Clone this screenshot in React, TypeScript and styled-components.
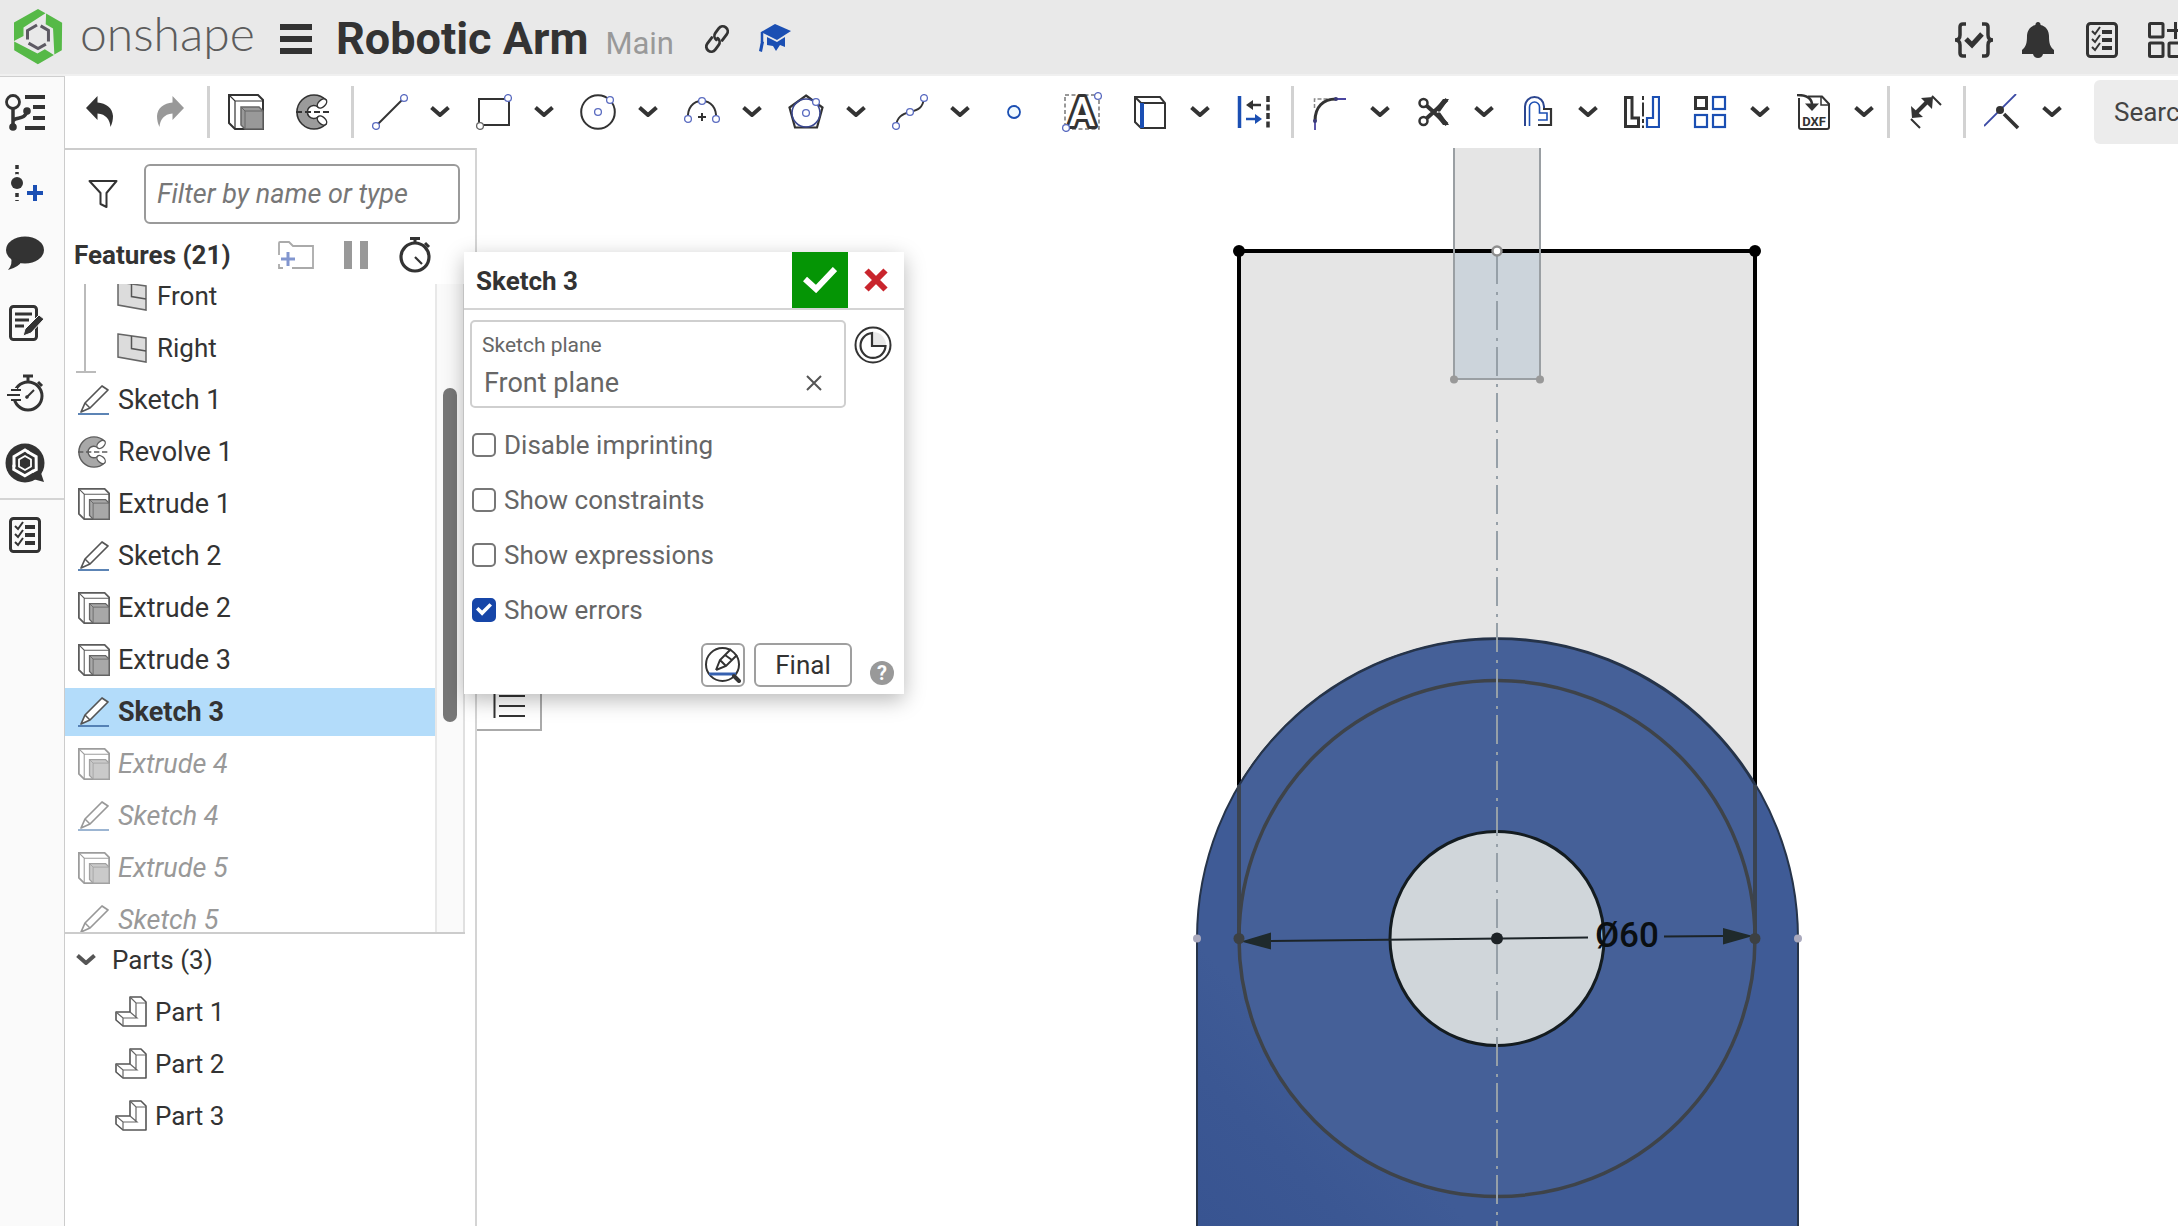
import React from "react";
import styled, { createGlobalStyle, css } from "styled-components";

const INK = "#333333";
const BLUE = "#1b4fb3";
const PALE_BLUE = "#5a6bc0";

const GlobalStyle = createGlobalStyle`
  * { box-sizing: border-box; }
  html, body { margin: 0; padding: 0; background: #ffffff; }
  body {
    font-family: Roboto, "Liberation Sans", sans-serif;
    font-size: 26px;
    line-height: 32px;
    color: ${INK};
    overflow: hidden;
  }
  button, input { font: inherit; color: inherit; }
  ul { list-style: none; margin: 0; padding: 0; }
  svg { display: block; flex: none; }
`;

/* ---------- icons ---------- */

type IconProps = { size?: number; soft?: boolean };

const Icon = ({
  w = 36,
  h = 36,
  box,
  children,
}: {
  w?: number;
  h?: number;
  box?: string;
  children: React.ReactNode;
}) => (
  <svg width={w} height={h} viewBox={box ?? `0 0 ${w} ${h}`} fill="none" aria-hidden="true">
    {children}
  </svg>
);

const Knot = ({ x, y, c = PALE_BLUE }: { x: number; y: number; c?: string }) => (
  <circle cx={x} cy={y} r="3.4" fill="#fff" stroke={c} strokeWidth="1.3" />
);

const LogoMark = () => (
  <Icon w={50} h={56}>
    {[0, 120, 240].map((a) => (
      <path
        key={a}
        d="M1 32V13.500L25 0L32.500 4.300L10.500 18.500V27Z"
        fill="#56b947"
        transform={`rotate(${a} 25 27.5)`}
      />
    ))}
    {[0, 120, 240].map((a) => (
      <path
        key={a}
        d="M14.500 30.500V21.500L24 16"
        stroke="#5d5a63"
        strokeWidth="3"
        transform={`rotate(${a} 25 27.5)`}
      />
    ))}
  </Icon>
);

const MenuIcon = () => (
  <Icon w={32} h={30}>
    <path d="M0 3H32M0 15H32M0 27H32" stroke={INK} strokeWidth="6" />
  </Icon>
);

const LinkIcon = () => (
  <Icon w={30} h={30}>
    <g transform="rotate(-53 15 15)" stroke={INK} strokeWidth="2.800" strokeLinecap="round">
      <path d="M13 10H5.500a5 5 0 0 0 0 10H11a5 5 0 0 0 5-5" />
      <path d="M17 20h7.500a5 5 0 0 0 0-10H19a5 5 0 0 0-5 5" />
    </g>
  </Icon>
);

const GradCapIcon = () => (
  <Icon w={34} h={32}>
    <path d="M17 1L33 8L19 17L3 9Z" fill={BLUE} />
    <path d="M9 14L19 19L27 14V24L22 22L18 28L15 23L9 22Z" fill={BLUE} />
    <path d="M4 9V19" stroke={BLUE} strokeWidth="2.500" />
    <path d="M3 18L6 19L4 29L1 28Z" fill={BLUE} />
  </Icon>
);

const BracesIcon = () => (
  <Icon w={40}>
    <path
      d="M12 2H9Q6 2 6 5V13Q6 18 1 18Q6 18 6 23V31Q6 34 9 34H12M28 2H31Q34 2 34 5V13Q34 18 39 18Q34 18 34 23V31Q34 34 31 34H28"
      stroke={INK}
      strokeWidth="3.500"
    />
    <path d="M12 17L18 23L28 12" stroke={INK} strokeWidth="5" />
  </Icon>
);

const BellIcon = () => (
  <Icon>
    <path
      d="M18 0a2.500 2.500 0 0 1 2.500 3C26 4 29 9 29 14C29 21 30 25 34 28V32H2V28C6 25 7 21 7 14C7 9 10 4 15.500 3A2.500 2.500 0 0 1 18 0Z"
      fill={INK}
    />
    <path d="M13 32H23Q22 36 18 36Q14 36 13 32Z" fill={INK} />
  </Icon>
);

const ChecklistIcon = () => (
  <Icon>
    <rect x="3.500" y="1.500" width="29" height="33" rx="3" stroke={INK} strokeWidth="3" />
    <path d="M18 10H28M18 18H28M18 26H28" stroke={INK} strokeWidth="4" />
    <path d="M8 9L11 12L16 5M8 17L11 20L16 13M8 25L11 28L16 21" stroke={INK} strokeWidth="2" />
  </Icon>
);

const AppsIcon = () => (
  <Icon>
    <g stroke={INK} strokeWidth="3">
      <rect x="1.500" y="1.500" width="13.500" height="13.500" rx="1" />
      <rect x="1.500" y="21" width="13.500" height="13.500" rx="1" />
      <rect x="21" y="21" width="13.500" height="13.500" rx="1" />
      <path d="M19 8.500H36M27.500 0V17" />
    </g>
  </Icon>
);

const ChevronIcon = ({ color = INK, w = 20 }: { color?: string; w?: number }) => (
  <Icon w={w} h={12} box="0 0 20 12">
    <path d="M1.500 1.500L10 9L18.500 1.500" stroke={color} strokeWidth="4" strokeLinejoin="round" />
  </Icon>
);

const CURVED_ARROW =
  "M2 14L13.500 2V8.500C22 9 28.500 14 29 22C29 26 28 30 26.500 33C26 26 22 20 13.500 19.500V26Z";

const UndoIcon = () => (
  <Icon>
    <path d={CURVED_ARROW} fill={INK} />
  </Icon>
);

const RedoIcon = () => (
  <Icon>
    <path d={CURVED_ARROW} fill="#999" transform="translate(34 0) scale(-1 1)" />
  </Icon>
);

const ExtrudeIcon = ({ size = 36, soft }: IconProps) => {
  const line = soft ? "#5c5c5c" : INK;
  return (
    <Icon w={size} h={size} box="0 0 36 36">
      <path d="M1 1H30L35 6V35H7L1 29Z" fill="#fff" stroke={line} strokeWidth="2" />
      <path d="M1 1L7 7H35M7 7V35" stroke={line} strokeWidth="1.200" />
      <path d="M13 13H31L35 17V35H17L13 31Z" fill={soft ? "#a8a8a8" : "#999"} stroke="#666" strokeWidth="1.500" />
      <path d="M13 13L17 17H35M17 17V35" stroke="#666" strokeWidth="1" />
    </Icon>
  );
};

const RevolveIcon = ({ size = 36, soft }: IconProps) => {
  const line = soft ? "#5c5c5c" : INK;
  return (
    <Icon w={size} h={size} box="0 0 36 36">
      <path
        d="M30 6A17 17 0 1 0 30 30L22 23A6.500 6.500 0 1 1 22 13Z"
        fill={soft ? "#a8a8a8" : "#9b9b9b"}
        stroke={line}
        strokeWidth="1.600"
      />
      <ellipse cx="26" cy="9.500" rx="5.500" ry="3.500" transform="rotate(-43 26 9.500)" fill="#fff" stroke={line} strokeWidth="1.500" />
      <ellipse cx="26" cy="26.500" rx="5.500" ry="3.500" transform="rotate(43 26 26.500)" fill="#fff" stroke={line} strokeWidth="1.500" />
      <path d="M0 18H36" stroke={line} strokeWidth="1.800" strokeDasharray="6 3" />
    </Icon>
  );
};

const LineIcon = () => (
  <Icon>
    <path d="M4 32L32 4" stroke={INK} strokeWidth="2" />
    <Knot x={4} y={32} />
    <Knot x={32} y={4} />
  </Icon>
);

const RectIcon = () => (
  <Icon>
    <rect x="3" y="5" width="30" height="26" stroke={INK} strokeWidth="2" />
    <Knot x={32} y={4} />
    <Knot x={4} y={32} c="#666" />
  </Icon>
);

const CircleIcon = () => (
  <Icon>
    <circle cx="18" cy="18" r="16.800" stroke={INK} strokeWidth="2" />
    <Knot x={18} y={18} />
    <Knot x={30} y={6} />
  </Icon>
);

const ArcIcon = () => (
  <Icon>
    <path d="M4 25C3 14 9 7 18 7S33 14 32 25" stroke={INK} strokeWidth="2" />
    <path d="M14 23H22M18 19V27" stroke={INK} strokeWidth="2" />
    <Knot x={18} y={7} />
    <Knot x={4} y={25} />
    <Knot x={32} y={25} />
  </Icon>
);

const PolygonIcon = () => (
  <Icon>
    <path d="M18 1.500L34.500 13.500L29 33.500H7L1.500 13.500Z" stroke={INK} strokeWidth="2.200" />
    <circle cx="18" cy="19" r="14" stroke="#3a4790" strokeWidth="1.500" />
    <Knot x={18} y={19} />
    <Knot x={28} y={8} />
  </Icon>
);

const SplineIcon = () => (
  <Icon>
    <path d="M4 32C5 23 10 20 18 18S31 14 32 4" stroke={INK} strokeWidth="2" />
    <Knot x={4} y={32} />
    <Knot x={18} y={18} />
    <Knot x={32} y={4} />
  </Icon>
);

const PointIcon = () => (
  <Icon>
    <circle cx="18" cy="18" r="6" fill="#f0faff" stroke={BLUE} strokeWidth="1.800" />
  </Icon>
);

const TextIcon = () => (
  <Icon w={40} h={40}>
    <rect x="3" y="3" width="34" height="34" stroke="#777" strokeWidth="1.500" strokeDasharray="4 2.500" />
    <text
      x="20"
      y="34"
      textAnchor="middle"
      fontSize="40"
      fontWeight="500"
      fontFamily="Roboto, sans-serif"
      fill="#fff"
      stroke={INK}
      strokeWidth="6"
      strokeLinejoin="round"
      paintOrder="stroke"
    >
      A
    </text>
    <Knot x={36} y={4} />
    <Knot x={4} y={36} />
  </Icon>
);

const UseIcon = () => (
  <Icon>
    <path d="M3 3H28L33 9V34H9L3 28Z" stroke={INK} strokeWidth="2" />
    <path d="M3 3L9 9H33" stroke={INK} strokeWidth="2" />
    <path d="M10 9V34" stroke={BLUE} strokeWidth="4" />
  </Icon>
);

const SpacingIcon = () => (
  <Icon>
    <path d="M3.500 2V34" stroke={BLUE} strokeWidth="3.500" />
    <path d="M32 2V34" stroke={INK} strokeWidth="3.500" strokeDasharray="6 2.500" />
    <path d="M25 11H14" stroke={INK} strokeWidth="2.500" />
    <path d="M17 6L10 11L17 16Z" fill={INK} />
    <path d="M10 25H21" stroke={BLUE} strokeWidth="2.500" />
    <path d="M19 20L26 25L19 30Z" fill={BLUE} />
  </Icon>
);

const FilletIcon = () => (
  <Icon>
    <path d="M2.500 14V5H18" stroke="#888" strokeWidth="1.500" strokeDasharray="4 2" />
    <path d="M3 27C3 13 11 5 24 5" stroke={INK} strokeWidth="3" />
    <path d="M3 26V36M24 5H34" stroke="#4a45a0" strokeWidth="1.800" />
    <circle cx="3" cy="27" r="2" fill="#3a3a78" />
    <circle cx="24" cy="5" r="2" fill="#3a3a78" />
  </Icon>
);

const TrimIcon = () => (
  <Icon>
    <g stroke={INK}>
      <circle cx="7.500" cy="9" r="4" strokeWidth="2.500" />
      <circle cx="7.500" cy="27" r="4" strokeWidth="2.500" />
      <path d="M11 24L22 14L31 5.500M11 12L22 22L31 30.500" strokeWidth="4" />
    </g>
    <path d="M20 14L27 5H33L23 19ZM20 22L27 31H33L23 17Z" fill={INK} />
  </Icon>
);

const OffsetIcon = () => (
  <Icon>
    <path d="M5 32V12.500A9.500 9.500 0 0 1 24 12.500V15H31" stroke="#2c4690" strokeWidth="2" />
    <path d="M23 15H31V31H18" stroke={INK} strokeWidth="2.200" />
    <path d="M9.500 32V13A5 5 0 0 1 19.500 13V19H27V26H18" stroke={BLUE} strokeWidth="1.600" />
  </Icon>
);

const MirrorIcon = () => (
  <Icon>
    <path d="M1.500 3.500H8V24H14.500V32.500H1.500Z" stroke={INK} strokeWidth="3" />
    <path d="M19 2V34" stroke={INK} strokeWidth="2" strokeDasharray="4 2.500 14 2.500" />
    <path d="M35 3H29V24H23V33H35Z" stroke={BLUE} strokeWidth="2.200" />
  </Icon>
);

const PatternIcon = () => (
  <Icon>
    <rect x="3.500" y="3.500" width="11" height="11" stroke={INK} strokeWidth="3" />
    <rect x="21" y="3" width="12" height="12" stroke={BLUE} strokeWidth="2.200" />
    <rect x="3" y="21" width="12" height="12" stroke={BLUE} strokeWidth="2.200" />
    <rect x="21" y="21" width="12" height="12" stroke={BLUE} strokeWidth="2.200" />
  </Icon>
);

const DxfIcon = () => (
  <Icon>
    <path d="M12 2.500H26L33 10V33Q33 35 31 35H5Q3 35 3 33V4" stroke={INK} strokeWidth="2" />
    <path d="M25 3V11H33" stroke={INK} strokeWidth="1.500" />
    <path d="M1 1C10 1 16 4 16 11" stroke={INK} strokeWidth="2.500" />
    <path d="M9 9.500H23L16 17Z" fill={INK} />
    <text x="18" y="32" textAnchor="middle" fontSize="13" fontWeight="700" fontFamily="Roboto, sans-serif" fill={INK}>
      DXF
    </text>
  </Icon>
);

const DimensionIcon = () => (
  <Icon>
    <path d="M8 19L20 7" stroke={INK} strokeWidth="4" />
    <path d="M13 4L25 3L24 15ZM3 12L4 24L15 23Z" fill={INK} />
    <path d="M24 2L33 11M3 25L12 34" stroke={INK} strokeWidth="2" />
  </Icon>
);

const ConstraintIcon = () => (
  <Icon>
    <path d="M0 32L32 0" stroke="#3b4aa5" strokeWidth="1.800" />
    <circle cx="16" cy="16" r="4" fill={INK} />
    <path d="M20 20L34 34" stroke={INK} strokeWidth="3.500" />
  </Icon>
);

const TreeIcon = () => (
  <Icon w={40} h={40}>
    <circle cx="8" cy="9" r="6.500" stroke={INK} strokeWidth="2.800" />
    <path d="M8 16V34M8 28C10 23 20 28 22 18" stroke={INK} strokeWidth="3.500" />
    <circle cx="22" cy="18" r="3.800" fill={INK} />
    <circle cx="8" cy="34" r="3.800" fill={INK} />
    <path d="M20 4H40M28 14H40M28 25H40M20 35H40" stroke={INK} strokeWidth="3.800" />
  </Icon>
);

const VersionIcon = () => (
  <Icon w={40} h={40}>
    <path d="M12 2V38" stroke={INK} strokeWidth="3.500" strokeDasharray="4 3" />
    <circle cx="12" cy="20" r="9" fill="#fafafa" />
    <circle cx="12" cy="20" r="6" fill={INK} />
    <path d="M22 30H38M30 22V38" stroke={BLUE} strokeWidth="4" />
  </Icon>
);

const CommentIcon = () => (
  <Icon w={40} h={40}>
    <ellipse cx="20" cy="17" rx="19" ry="13.500" fill={INK} />
    <path d="M6 24Q8 31 3 37Q14 34 17 28Z" fill={INK} />
  </Icon>
);

const NoteIcon = () => (
  <Icon w={40} h={40}>
    <rect x="5.500" y="3.500" width="26" height="33" rx="3" stroke={INK} strokeWidth="3" />
    <path d="M10 11H27M10 17H24M10 23H19" stroke={INK} strokeWidth="3" />
    <path d="M34 12L39 16L26 30L18 33L20 26Z" fill={INK} stroke="#fafafa" strokeWidth="1" />
  </Icon>
);

const TimerIcon = () => (
  <Icon w={40} h={40}>
    <circle cx="23" cy="23" r="14" stroke={INK} strokeWidth="3" />
    <path d="M18 3H28M23 3V9M33 9L37 13" stroke={INK} strokeWidth="3" />
    <path d="M21 25L29 17" stroke={INK} strokeWidth="2" />
    <circle cx="22" cy="24" r="1.800" fill={INK} />
    <path d="M6 15H12V28H6Z" fill="#fafafa" />
    <path d="M6 17H16M2 22H15M6 27H16" stroke={INK} strokeWidth="2" />
  </Icon>
);

const AssistantIcon = () => (
  <Icon w={40} h={40}>
    <circle cx="20" cy="20" r="19.500" fill={INK} />
    <path d="M28 36L39 39L35 27Z" fill={INK} />
    {[0, 120, 240].map((a) => (
      <path key={a} d="M9 24V13.500L20 7L24 9.500" stroke="#fff" strokeWidth="3" transform={`rotate(${a} 20 20)`} />
    ))}
    <path d="M20 13L26 16.500V23.500L20 27L14 23.500V16.500Z" stroke="#fff" strokeWidth="1.800" />
  </Icon>
);

const FunnelIcon = () => (
  <Icon w={30} h={30}>
    <path d="M1.500 2H28.500L18.500 14V28L12.500 25V14Z" stroke={INK} strokeWidth="2" strokeLinejoin="round" />
  </Icon>
);

const FolderIcon = () => (
  <Icon w={36} h={28}>
    <path d="M1 14V2Q1 1 2 1H11L15 5H35V27H14M1 23V27H5" stroke="#aaa" strokeWidth="1.800" />
    <path d="M3 18H17M10 11V25" stroke="#8296cf" strokeWidth="3" />
  </Icon>
);

const PauseIcon = () => (
  <Icon w={24} h={28}>
    <path d="M4 0V28M20 0V28" stroke="#999" strokeWidth="8" />
  </Icon>
);

const StopwatchIcon = () => (
  <Icon w={34} h={36}>
    <circle cx="17" cy="20" r="14" stroke={INK} strokeWidth="3.200" />
    <path d="M12 1.500H22M17 1.500V6M27 6L31 10" stroke={INK} strokeWidth="3" />
    <path d="M17 20L24 27" stroke={INK} strokeWidth="2.200" />
  </Icon>
);

const PlaneIcon = () => (
  <Icon w={30} h={30}>
    <path d="M1 1L29 5V29L1 24Z" fill="#dcdcdc" stroke="#666" strokeWidth="1.500" />
    <path d="M14.500 3V15.500L29 18" stroke="#555" strokeWidth="1.500" />
  </Icon>
);

const PencilIcon = () => (
  <Icon w={32} h={32}>
    <path d="M3 28L7 19L24 2L30 6L12 24Z" fill="#fff" stroke="#555" strokeWidth="1.700" strokeLinejoin="round" />
    <path d="M7 19L12 24" stroke="#555" strokeWidth="1.500" />
    <path d="M0 30H31" stroke="#4a76ad" strokeWidth="1.800" />
  </Icon>
);

const PartIcon = () => (
  <Icon w={32} h={32}>
    <path d="M15 1H26L31 6V30H8L1 24V16H15Z" stroke="#555" strokeWidth="1.600" strokeLinejoin="round" />
    <path d="M15 1L21 7H31M21 7V21M1 16L8 22H22L15 16M8 22V30" stroke="#666" strokeWidth="1.200" />
  </Icon>
);

const CheckIcon = () => (
  <Icon w={34} h={26}>
    <path d="M2 12L13 22L32 2" stroke="#fff" strokeWidth="6" />
  </Icon>
);

const CancelIcon = () => (
  <Icon w={24} h={24}>
    <path d="M2.500 2.500L21.500 21.500M21.500 2.500L2.500 21.500" stroke="#c9252d" strokeWidth="6" />
  </Icon>
);

const ClearIcon = () => (
  <Icon w={16} h={16}>
    <path d="M1 1L15 15M15 1L1 15" stroke="#555" strokeWidth="2" />
  </Icon>
);

const HistoryIcon = () => (
  <Icon w={38} h={38}>
    <circle cx="19" cy="19" r="17.500" stroke={INK} strokeWidth="2" />
    <path d="M19 6A13 13 0 0 1 32 20H19Z" fill="#e8e8e8" />
    <path d="M18 7A12.500 12.500 0 1 0 31.500 20H18Z" stroke={INK} strokeWidth="2.200" />
  </Icon>
);

const SketchZoomIcon = () => (
  <Icon w={36} h={36}>
    <circle cx="17.500" cy="17.500" r="16.500" stroke={INK} strokeWidth="2" />
    <path d="M11 23L15 13L26 2M11 23L21 19L32 8M15 13L21 19M20 8L27 13" stroke={INK} strokeWidth="2" />
    <path d="M4 27H31" stroke="#3560b0" strokeWidth="3" />
    <path d="M29 29L34 34" stroke={INK} strokeWidth="4" strokeLinecap="round" />
  </Icon>
);

const OutlineIcon = () => (
  <Icon w={32} h={24}>
    <path d="M1.500 0V24M6 2H32M6 12H32M6 22H32" stroke={INK} strokeWidth="2" />
  </Icon>
);

/* ---------- shell ---------- */

const Page = styled.div`
  display: flex;
  flex-direction: column;
  height: 100vh;
  overflow: hidden;
`;

const PlainButton = styled.button`
  display: flex;
  align-items: center;
  justify-content: center;
  flex: none;
  padding: 0;
  border: 0;
  background: none;
`;

const Header = styled.header`
  display: flex;
  align-items: center;
  flex: none;
  height: 76px;
  padding-left: 13px;
  background: #e9e9e9;
  border-bottom: 2px solid #f0f0f0;
  overflow: hidden;
`;

const Brand = styled.a`
  display: flex;
  align-items: center;
  gap: 17px;
  flex: 0 0 267px;
  height: 72px;
  color: #5c5c5c;
  font-family: Lato, sans-serif;
  font-weight: 300;
  font-size: 48px;
  line-height: 48px;
  text-decoration: none;
  white-space: nowrap;
`;

const BrandName = styled.span`
  padding-bottom: 8px;
`;

const MenuButton = styled(PlainButton)`
  padding-top: 4px;
`;

const TitleGroup = styled.div`
  display: flex;
  align-items: baseline;
  padding-top: 4px;
`;

const Title = styled.h1`
  margin: 0 17px 0 24px;
  font-size: 45px;
  line-height: 56px;
  font-weight: 700;
  white-space: nowrap;
`;

const Workspace = styled.span`
  font-size: 31px;
  color: #999999;
`;

const TitleActions = styled.div`
  display: flex;
  gap: 26px;
  margin-left: 28px;
  padding-top: 4px;
`;

const HeaderActions = styled.div`
  display: flex;
  margin-left: auto;
  margin-right: -20px;
`;

const HeaderButton = styled(PlainButton)`
  width: 64px;
  height: 64px;
  padding-top: 6px;
`;

const Body = styled.div`
  display: flex;
  flex: 1;
  min-height: 0;
`;

const Rail = styled.nav`
  display: flex;
  flex-direction: column;
  flex: 0 0 65px;
  padding-top: 1px;
  background: #fafafa;
  border-top: 1px solid #cfcfcf;
  border-right: 1px solid #cccccc;
`;

const RailGroup = styled.div`
  display: flex;
  flex-direction: column;

  & + & {
    border-top: 2px solid #d4d4d4;
  }
`;

const RailButton = styled(PlainButton)`
  width: 50px;
  height: 70px;
`;

const Main = styled.main`
  display: flex;
  flex-direction: column;
  flex: 1;
  min-width: 0;
`;

/* ---------- toolbar ---------- */

const Toolbar = styled.div`
  display: flex;
  align-items: center;
  flex: none;
  height: 72px;
  padding-left: 11px;
  overflow: hidden;
`;

const ToolGroup = styled.div`
  display: flex;
  gap: 16px;
  flex: none;
`;

const Tool = styled.div`
  display: flex;
`;

const ToolButton = styled(PlainButton)`
  width: 52px;
  height: 52px;
`;

const ToolMenuButton = styled(PlainButton)`
  width: 36px;
  height: 52px;
  padding-left: 12px;
`;

const Divider = styled.span`
  flex: none;
  width: 3px;
  height: 52px;
  margin: 0 10px 0 11px;
  background: #d2d2d2;
`;

const SearchBox = styled.input`
  flex: 0 0 200px;
  height: 64px;
  margin-left: 30px;
  padding: 0 20px;
  border: 0;
  border-radius: 6px;
  background: #ececec;

  &::placeholder {
    color: #444444;
    opacity: 1;
  }
`;

/* ---------- feature panel ---------- */

const Content = styled.div`
  position: relative;
  display: flex;
  flex: 1;
  min-height: 0;
`;

const Panel = styled.aside`
  display: flex;
  flex-direction: column;
  flex: 0 0 412px;
  min-width: 0;
  border-top: 2px solid #cccccc;
  border-right: 2px solid #d4d4d4;
`;

const FilterRow = styled.div`
  display: flex;
  align-items: center;
  gap: 26px;
  padding: 14px 15px 0 23px;
`;

const FilterInput = styled.input`
  flex: 1;
  min-width: 0;
  height: 60px;
  padding: 0 11px;
  border: 2px solid #9a9a9a;
  border-radius: 6px;
  font-size: 27px;
  font-style: italic;

  &::placeholder {
    color: #777777;
    opacity: 1;
  }
`;

const FeaturesHeader = styled.div`
  display: flex;
  align-items: center;
  flex: none;
  height: 60px;
  padding: 2px 0 0 9px;
`;

const PanelTitle = styled.h2`
  flex: 0 0 204px;
  margin: 0;
  font-size: 26px;
  font-weight: 700;
`;

const FeatureActions = styled.div`
  display: flex;
  align-items: center;
  gap: 30px;
`;

const FeatureArea = styled.div`
  display: flex;
  flex: 1;
  min-height: 0;
  margin-right: 10px;
  overflow: hidden;
  border-bottom: 2px solid #cccccc;
`;

const FeatureList = styled.ul`
  flex: 1;
  margin-top: -14px;
`;

const PlaneGroup = styled.li`
  display: grid;
  grid-template-columns: 20px 1fr;
  column-gap: 21px;
  padding-left: 11px;
  height: 104px;
`;

const Bracket = styled.svg`
  width: 20px;
  height: 103px;
`;

const itemText = css`
  display: flex;
  align-items: center;
  width: 100%;
  height: 52px;
  white-space: nowrap;
`;

const ChildRow = styled.li`
  ${itemText}
  gap: 10px;
`;

const FeatureRow = styled.li<{ $state?: "active" | "suppressed" }>`
  ${itemText}
  gap: 8px;
  padding-left: 13px;
  font-size: 27px;

  ${(p) =>
    p.$state === "active" &&
    css`
      height: 48px;
      margin: 2px 0;
      background: #b3dcfa;
      font-weight: 700;
    `}

  ${(p) =>
    p.$state === "suppressed" &&
    css`
      color: #999999;
      font-style: italic;

      svg {
        opacity: 0.6;
      }
    `}
`;

const ScrollTrack = styled.div`
  flex: 0 0 29px;
  padding: 104px 6px 0;
  background: #fafafa;
  border-left: 2px solid #e8e8e8;
  border-right: 2px solid #e0e0e0;
`;

const ScrollThumb = styled.div`
  width: 14px;
  height: 334px;
  border-radius: 7px;
  background: #777777;
`;

const PartsArea = styled.section`
  flex: 0 0 292px;
`;

const PartsHeader = styled(PlainButton)`
  gap: 14px;
  height: 52px;
  padding-left: 9px;
`;

const PartRow = styled.li`
  ${itemText}
  gap: 8px;
  padding-left: 50px;
`;

/* ---------- canvas ---------- */

const Canvas = styled.section`
  flex: 1;
  min-width: 0;
  overflow: hidden;
`;

const Drawing = styled.svg`
  width: 100%;
  height: 100%;
`;

const OutlineButton = styled(PlainButton)`
  position: absolute;
  left: 412px;
  top: 520px;
  width: 65px;
  height: 63px;
  padding: 12px 0 0;
  background: #ffffff;
  border: 2px solid #aaaaaa;
  border-left: 0;
`;

/* ---------- sketch dialog ---------- */

const Dialog = styled.form`
  position: absolute;
  left: 399px;
  top: 104px;
  width: 440px;
  background: #ffffff;
  box-shadow: 0 6px 20px rgba(0, 0, 0, 0.28);
  color: #666666;
`;

const DialogHeader = styled.div`
  display: flex;
  align-items: center;
  height: 58px;
  border-bottom: 2px solid #d4d4d4;
`;

const DialogTitle = styled.h2`
  flex: 1;
  margin: 0;
  padding: 2px 0 0 12px;
  color: ${INK};
  font-size: 26px;
  font-weight: 700;
`;

const AcceptButton = styled(PlainButton)`
  width: 56px;
  height: 56px;
  background: #059505;
`;

const CancelButton = styled(PlainButton)`
  width: 56px;
  height: 56px;
`;

const DialogBody = styled.div`
  display: flex;
  align-items: flex-start;
  justify-content: space-between;
  padding: 10px 12px 0 6px;
`;

const PlaneField = styled.div`
  width: 376px;
  height: 88px;
  padding: 8px 22px 0 10px;
  border: 2px solid #cfcfcf;
  border-radius: 5px;
`;

const FieldLabel = styled.div`
  font-size: 21px;
  line-height: 30px;
`;

const FieldValue = styled.div`
  display: flex;
  align-items: center;
  justify-content: space-between;
  padding-left: 2px;
  font-size: 27px;
  line-height: 46px;
`;

const HistoryButton = styled(PlainButton)`
  padding-top: 6px;
`;

const Options = styled.div`
  display: grid;
  grid-auto-rows: 55px;
  padding: 9px 8px 0;
`;

const Option = styled.label`
  display: flex;
  align-items: center;
  gap: 8px;
`;

const Checkbox = styled.input`
  appearance: none;
  display: grid;
  place-items: center;
  flex: none;
  width: 24px;
  height: 24px;
  margin: 0;
  border: 2px solid #777777;
  border-radius: 5px;

  &:checked {
    border-color: #1746a8;
    background: #1746a8;
  }

  &:checked::before {
    content: "";
    width: 16px;
    height: 14px;
    background: #ffffff;
    clip-path: polygon(0 50%, 15% 33%, 38% 57%, 84% 5%, 100% 22%, 38% 95%);
  }
`;

const DialogFooter = styled.div`
  display: flex;
  align-items: center;
  justify-content: flex-end;
  gap: 9px;
  padding: 6px 10px 7px 0;
`;

const OutlinedButton = styled(PlainButton)<{ $width: number }>`
  width: ${(p) => p.$width}px;
  height: 44px;
  border: 2px solid #9f9f9f;
  border-radius: 6px;
  background: #ffffff;
  color: ${INK};
`;

const HelpButton = styled(PlainButton)`
  align-self: flex-end;
  width: 24px;
  height: 24px;
  margin: 0 0 2px 9px;
  border-radius: 12px;
  background: #999999;
  color: #ffffff;
  font-size: 20px;
  line-height: 24px;
  font-weight: 700;
`;

/* ---------- data ---------- */

type ToolDef = { name: string; icon: React.ReactNode; menu?: boolean };

const toolGroups: ToolDef[][] = [
  [
    { name: "Undo", icon: <UndoIcon /> },
    { name: "Redo", icon: <RedoIcon /> },
  ],
  [
    { name: "Extrude", icon: <ExtrudeIcon /> },
    { name: "Revolve", icon: <RevolveIcon /> },
  ],
  [
    { name: "Line", icon: <LineIcon />, menu: true },
    { name: "Rectangle", icon: <RectIcon />, menu: true },
    { name: "Circle", icon: <CircleIcon />, menu: true },
    { name: "Arc", icon: <ArcIcon />, menu: true },
    { name: "Polygon", icon: <PolygonIcon />, menu: true },
    { name: "Spline", icon: <SplineIcon />, menu: true },
    { name: "Point", icon: <PointIcon /> },
    { name: "Text", icon: <TextIcon /> },
    { name: "Use", icon: <UseIcon />, menu: true },
    { name: "Construction", icon: <SpacingIcon /> },
  ],
  [
    { name: "Fillet", icon: <FilletIcon />, menu: true },
    { name: "Trim", icon: <TrimIcon />, menu: true },
    { name: "Offset", icon: <OffsetIcon />, menu: true },
    { name: "Mirror", icon: <MirrorIcon /> },
    { name: "Pattern", icon: <PatternIcon />, menu: true },
    { name: "Insert DXF", icon: <DxfIcon />, menu: true },
  ],
  [{ name: "Dimension", icon: <DimensionIcon /> }],
  [{ name: "Constraints", icon: <ConstraintIcon />, menu: true }],
];

const railGroups: ToolDef[][] = [
  [
    { name: "Feature tree", icon: <TreeIcon /> },
    { name: "Versions", icon: <VersionIcon /> },
    { name: "Comments", icon: <CommentIcon /> },
    { name: "Notes", icon: <NoteIcon /> },
    { name: "Timing", icon: <TimerIcon /> },
    { name: "Assistant", icon: <AssistantIcon /> },
  ],
  [{ name: "Tasks", icon: <ChecklistIcon /> }],
];

const headerActions: ToolDef[] = [
  { name: "Code", icon: <BracesIcon /> },
  { name: "Notifications", icon: <BellIcon /> },
  { name: "Checklist", icon: <ChecklistIcon /> },
  { name: "Apps", icon: <AppsIcon /> },
];

const features: { name: string; kind: "sketch" | "revolve" | "extrude"; state?: "active" | "suppressed" }[] = [
  { name: "Sketch 1", kind: "sketch" },
  { name: "Revolve 1", kind: "revolve" },
  { name: "Extrude 1", kind: "extrude" },
  { name: "Sketch 2", kind: "sketch" },
  { name: "Extrude 2", kind: "extrude" },
  { name: "Extrude 3", kind: "extrude" },
  { name: "Sketch 3", kind: "sketch", state: "active" },
  { name: "Extrude 4", kind: "extrude", state: "suppressed" },
  { name: "Sketch 4", kind: "sketch", state: "suppressed" },
  { name: "Extrude 5", kind: "extrude", state: "suppressed" },
  { name: "Sketch 5", kind: "sketch", state: "suppressed" },
];

const featureIcons = {
  sketch: <PencilIcon />,
  revolve: <RevolveIcon size={32} soft />,
  extrude: <ExtrudeIcon size={32} soft />,
};

const options = [
  { label: "Disable imprinting", on: false },
  { label: "Show constraints", on: false },
  { label: "Show expressions", on: false },
  { label: "Show errors", on: true },
];

/* ---------- sketch view ---------- */

const BODY_PATH = "M1197 1240V938.500A300.500 300.500 0 0 1 1798 938.500V1240Z";

const SketchView = () => (
  <Drawing viewBox="477 148 1701 1078" preserveAspectRatio="xMidYMin slice" role="img" aria-label="Sketch 3">
    <defs>
      <linearGradient id="shade" gradientUnits="userSpaceOnUse" x1="1200" y1="1226" x2="1340" y2="1090">
        <stop offset="0" stopColor="#385491" />
        <stop offset="0.55" stopColor="#3b5793" />
        <stop offset="1" stopColor="#3f5b96" />
      </linearGradient>
    </defs>
    <rect x="1454" y="140" width="86" height="111" fill="#e5e5e5" />
    <rect x="1239" y="251" width="516" height="690" fill="#e5e5e5" />
    <rect x="1454" y="251" width="86" height="128" fill="#ccd4db" />
    <path d="M1239 938V251H1755V938" fill="none" stroke="#000" strokeWidth="4" />
    <path d="M1454 140V379H1540V140" fill="none" stroke="#9a9fa3" strokeWidth="2" />
    <path d={BODY_PATH} fill="url(#shade)" stroke="#26344a" strokeWidth="2" />
    <path d="M1239 785.500A300.500 300.500 0 0 1 1755 785.500V938.500A258 258 0 0 1 1239 938.500Z" fill="#456098" />
    <path d="M1239 785.500A300.500 300.500 0 0 1 1755 785.500" fill="none" stroke="#26344a" strokeWidth="2" />
    <path d="M1239 785V938.500M1755 785V938.500" stroke="#3a4350" strokeWidth="4" />
    <circle cx="1497" cy="938.500" r="258" fill="none" stroke="#3e4349" strokeWidth="3.500" />
    <circle cx="1497" cy="938.500" r="107" fill="#d0d6da" stroke="#141c20" strokeWidth="3" />
    <path d="M1497 255V1230" stroke="#96a0a8" strokeWidth="2" strokeDasharray="29 8 3 6" />
    <path d="M1270 941L1588 937.500M1664 936.500L1724 936" stroke="#1c2428" strokeWidth="2" />
    <path d="M1241 941.500L1271 932.500V949.500ZM1753 936L1723 928V944.500Z" fill="#1f2a2c" />
    <circle cx="1239" cy="938.500" r="5.500" fill="#3c4043" />
    <circle cx="1755" cy="938.500" r="5.500" fill="#3c4043" />
    <circle cx="1497" cy="938.500" r="6" fill="#1d2326" />
    <circle cx="1239" cy="251" r="6" fill="#000" />
    <circle cx="1755" cy="251" r="6" fill="#000" />
    <circle cx="1497" cy="251" r="4.500" fill="#fff" stroke="#8e8e8e" strokeWidth="2.500" />
    <circle cx="1454" cy="379.500" r="4" fill="#999" />
    <circle cx="1540" cy="379.500" r="4" fill="#999" />
    <circle cx="1197" cy="938.500" r="4" fill="#aaa9bd" />
    <circle cx="1798" cy="938.500" r="4" fill="#aaa9bd" />
    <text x="1595" y="947" fontFamily="Roboto, sans-serif" fontSize="35" fontWeight="500" fill="#0a0f12">
      Ø60
    </text>
  </Drawing>
);

export default function App() {
  return (
    <Page>
      <GlobalStyle />
      <Header>
        <Brand href="#">
          <LogoMark />
          <BrandName>onshape</BrandName>
        </Brand>
        <MenuButton aria-label="Menu">
          <MenuIcon />
        </MenuButton>
        <TitleGroup>
          <Title>Robotic Arm</Title>
          <Workspace>Main</Workspace>
        </TitleGroup>
        <TitleActions>
          <PlainButton aria-label="Share link">
            <LinkIcon />
          </PlainButton>
          <PlainButton aria-label="Learning center">
            <GradCapIcon />
          </PlainButton>
        </TitleActions>
        <HeaderActions>
          {headerActions.map((a) => (
            <HeaderButton key={a.name} aria-label={a.name}>
              {a.icon}
            </HeaderButton>
          ))}
        </HeaderActions>
      </Header>

      <Body>
        <Rail>
          {railGroups.map((group, i) => (
            <RailGroup key={i}>
              {group.map((item) => (
                <RailButton key={item.name} aria-label={item.name}>
                  {item.icon}
                </RailButton>
              ))}
            </RailGroup>
          ))}
        </Rail>

        <Main>
          <Toolbar>
            {toolGroups.map((group, i) => (
              <React.Fragment key={i}>
                {i > 0 && <Divider />}
                <ToolGroup>
                  {group.map((tool) => (
                    <Tool key={tool.name}>
                      <ToolButton aria-label={tool.name}>{tool.icon}</ToolButton>
                      {tool.menu && (
                        <ToolMenuButton aria-label={`${tool.name} options`}>
                          <ChevronIcon />
                        </ToolMenuButton>
                      )}
                    </Tool>
                  ))}
                </ToolGroup>
              </React.Fragment>
            ))}
            <SearchBox type="text" placeholder="Search" aria-label="Search" />
          </Toolbar>

          <Content>
            <Panel>
              <FilterRow>
                <FunnelIcon />
                <FilterInput type="text" placeholder="Filter by name or type" aria-label="Filter by name or type" />
              </FilterRow>
              <FeaturesHeader>
                <PanelTitle>Features (21)</PanelTitle>
                <FeatureActions>
                  <PlainButton aria-label="Add folder">
                    <FolderIcon />
                  </PlainButton>
                  <PlainButton aria-label="Pause">
                    <PauseIcon />
                  </PlainButton>
                  <PlainButton aria-label="Regeneration times">
                    <StopwatchIcon />
                  </PlainButton>
                </FeatureActions>
              </FeaturesHeader>
              <FeatureArea>
                <FeatureList>
                  <PlaneGroup>
                    <Bracket viewBox="0 0 20 103" fill="none" aria-hidden="true">
                      <path d="M9 0V102M0 102H20" stroke="#bbbbbb" strokeWidth="2" />
                    </Bracket>
                    <ul>
                      {["Front", "Right"].map((name) => (
                        <ChildRow key={name}>
                          <PlaneIcon />
                          {name}
                        </ChildRow>
                      ))}
                    </ul>
                  </PlaneGroup>
                  {features.map((f) => (
                    <FeatureRow key={f.name} $state={f.state}>
                      {featureIcons[f.kind]}
                      {f.name}
                    </FeatureRow>
                  ))}
                </FeatureList>
                <ScrollTrack>
                  <ScrollThumb />
                </ScrollTrack>
              </FeatureArea>
              <PartsArea>
                <PartsHeader>
                  <ChevronIcon color="#555" w={24} />
                  Parts (3)
                </PartsHeader>
                <ul>
                  {["Part 1", "Part 2", "Part 3"].map((name) => (
                    <PartRow key={name}>
                      <PartIcon />
                      {name}
                    </PartRow>
                  ))}
                </ul>
              </PartsArea>
            </Panel>

            <Canvas>
              <SketchView />
            </Canvas>

            <OutlineButton aria-label="Outline">
              <OutlineIcon />
            </OutlineButton>

            <Dialog onSubmit={(e) => e.preventDefault()}>
              <DialogHeader>
                <DialogTitle>Sketch 3</DialogTitle>
                <AcceptButton aria-label="Accept">
                  <CheckIcon />
                </AcceptButton>
                <CancelButton type="button" aria-label="Cancel">
                  <CancelIcon />
                </CancelButton>
              </DialogHeader>
              <DialogBody>
                <PlaneField>
                  <FieldLabel>Sketch plane</FieldLabel>
                  <FieldValue>
                    Front plane
                    <PlainButton type="button" aria-label="Clear plane">
                      <ClearIcon />
                    </PlainButton>
                  </FieldValue>
                </PlaneField>
                <HistoryButton type="button" aria-label="History">
                  <HistoryIcon />
                </HistoryButton>
              </DialogBody>
              <Options>
                {options.map((o) => (
                  <Option key={o.label}>
                    <Checkbox type="checkbox" defaultChecked={o.on} />
                    {o.label}
                  </Option>
                ))}
              </Options>
              <DialogFooter>
                <OutlinedButton type="button" $width={44} aria-label="View normal to sketch">
                  <SketchZoomIcon />
                </OutlinedButton>
                <OutlinedButton type="button" $width={98}>
                  Final
                </OutlinedButton>
                <HelpButton type="button" aria-label="Help">
                  ?
                </HelpButton>
              </DialogFooter>
            </Dialog>
          </Content>
        </Main>
      </Body>
    </Page>
  );
}
